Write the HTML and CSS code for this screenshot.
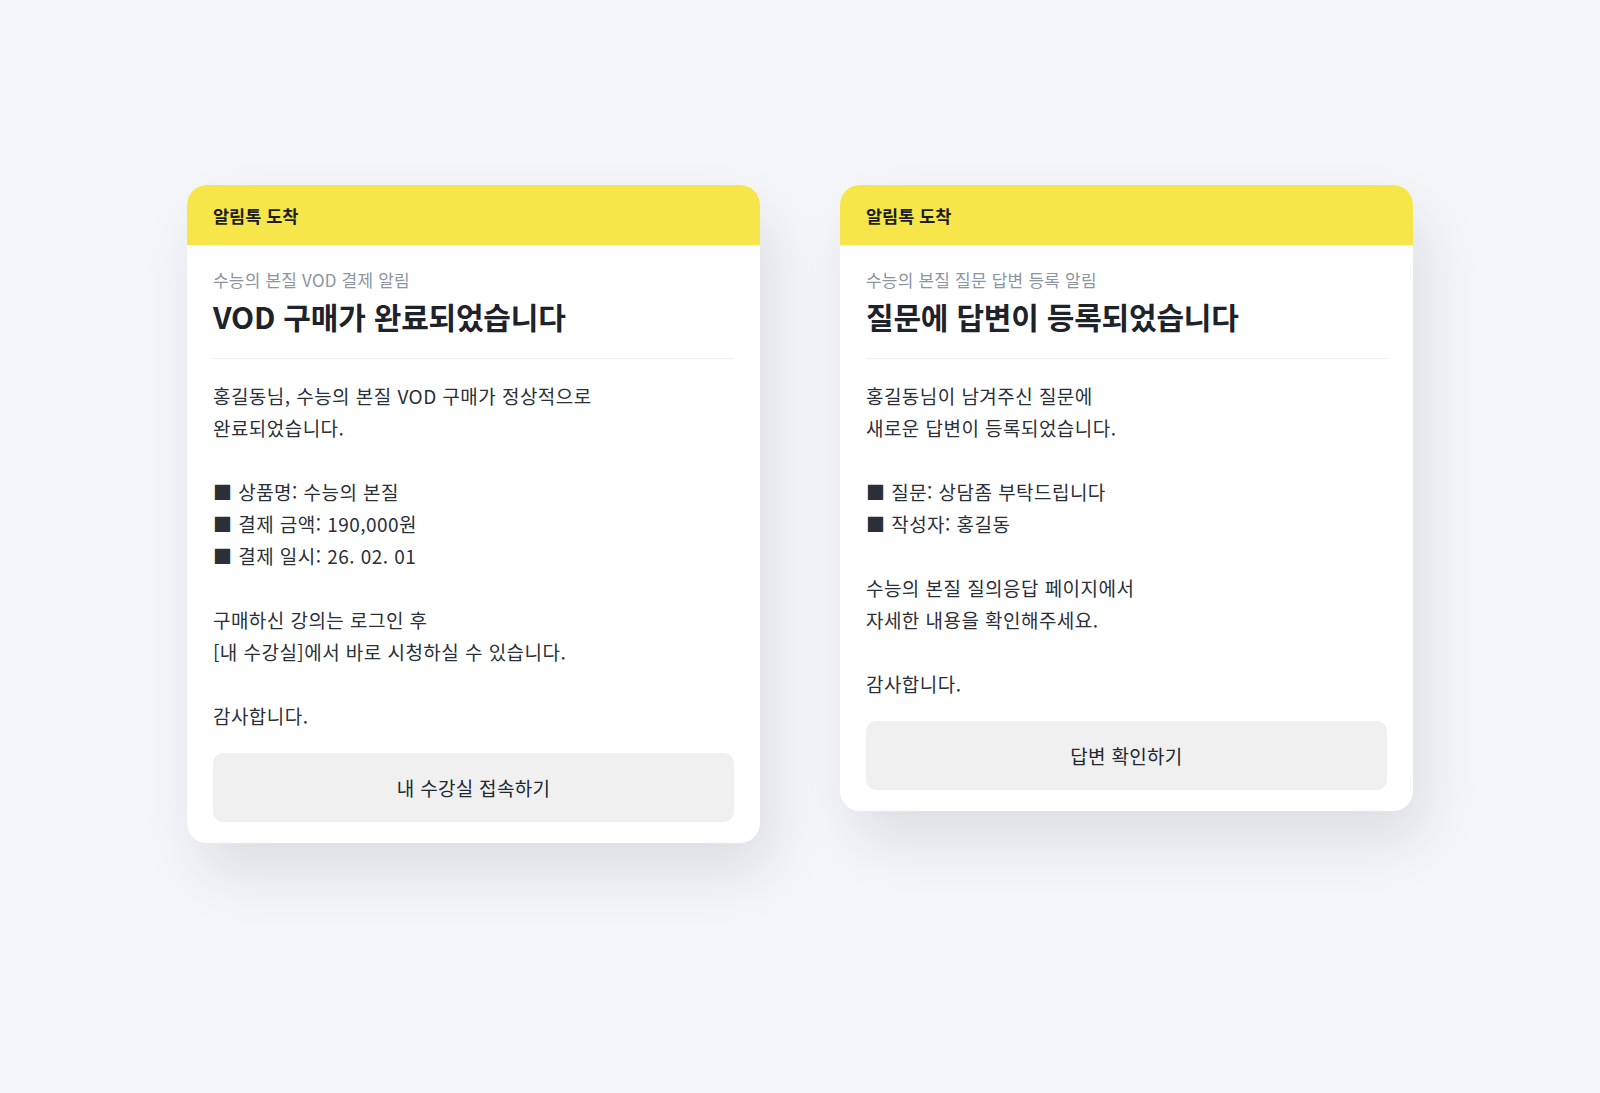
FILE: index.html
```html
<!DOCTYPE html>
<html lang="ko">
<head>
<meta charset="utf-8">
<title>알림톡</title>
<link rel="stylesheet" href="styles.css">
</head>
<body>
<main class="stage">
  <section class="card">
    <header class="card-head">알림톡 도착</header>
    <div class="card-body">
      <p class="sub">수능의 본질 VOD 결제 알림</p>
      <h1 class="title">VOD 구매가 완료되었습니다</h1>
      <hr class="divider">
      <p class="msg">홍길동님, 수능의 본질 VOD 구매가 정상적으로<br>완료되었습니다.<br><br>■ 상품명: 수능의 본질<br>■ 결제 금액: 190,000원<br>■ 결제 일시: 26. 02. 01<br><br>구매하신 강의는 로그인 후<br>[내 수강실]에서 바로 시청하실 수 있습니다.<br><br>감사합니다.</p>
      <button class="btn" type="button">내 수강실 접속하기</button>
    </div>
  </section>
  <section class="card">
    <header class="card-head">알림톡 도착</header>
    <div class="card-body">
      <p class="sub">수능의 본질 질문 답변 등록 알림</p>
      <h1 class="title">질문에 답변이 등록되었습니다</h1>
      <hr class="divider">
      <p class="msg">홍길동님이 남겨주신 질문에<br>새로운 답변이 등록되었습니다.<br><br>■ 질문: 상담좀 부탁드립니다<br>■ 작성자: 홍길동<br><br>수능의 본질 질의응답 페이지에서<br>자세한 내용을 확인해주세요.<br><br>감사합니다.</p>
      <button class="btn" type="button">답변 확인하기</button>
    </div>
  </section>
</main>
</body>
</html>
```
FILE: styles.css
```css
* { box-sizing: border-box; }
html, body {
  margin: 0;
  padding: 0;
  background: #f5f6fa;
}
body {
  font-family: "Noto Sans CJK KR", "Noto Sans", sans-serif;
  color: #2c313a;
}
.stage {
  display: flex;
  justify-content: center;
  align-items: flex-start;
  gap: 80px;
  padding-top: 185px;
  height: 1093px;
}
.card {
  width: 573px;
  background: #ffffff;
  border-radius: 20px;
  overflow: hidden;
  box-shadow: 12px 30px 60px rgba(30, 35, 50, 0.11);
}
.card-head {
  height: 60px;
  background: #f7e64a;
  padding: 0 26px;
  display: flex;
  align-items: center;
  font-size: 17.5px;
  font-weight: 700;
  color: #1b1d22;
}
.card-body {
  padding: 23px 26px 21px;
}
.sub {
  margin: 0;
  font-size: 17px;
  line-height: 24px;
  letter-spacing: 0.2px;
  color: #8b95a1;
}
.title {
  margin: 4px 0 0;
  font-size: 30px;
  line-height: 40px;
  font-weight: 700;
  color: #1d222b;
  letter-spacing: -0.2px;
}
.divider {
  margin: 22px 0 0;
  border: 0;
  height: 1px;
  background: #eef0f3;
}
.msg {
  margin: 21px 0 0;
  font-size: 19px;
  line-height: 32px;
  letter-spacing: 0.45px;
  color: #2a2f38;
}
.btn {
  display: block;
  width: 100%;
  height: 69px;
  margin-top: 21px;
  border: 0;
  border-radius: 10px;
  background: #f0f0f1;
  font-family: inherit;
  font-size: 19px;
  letter-spacing: 0.3px;
  color: #22262d;
}
```
